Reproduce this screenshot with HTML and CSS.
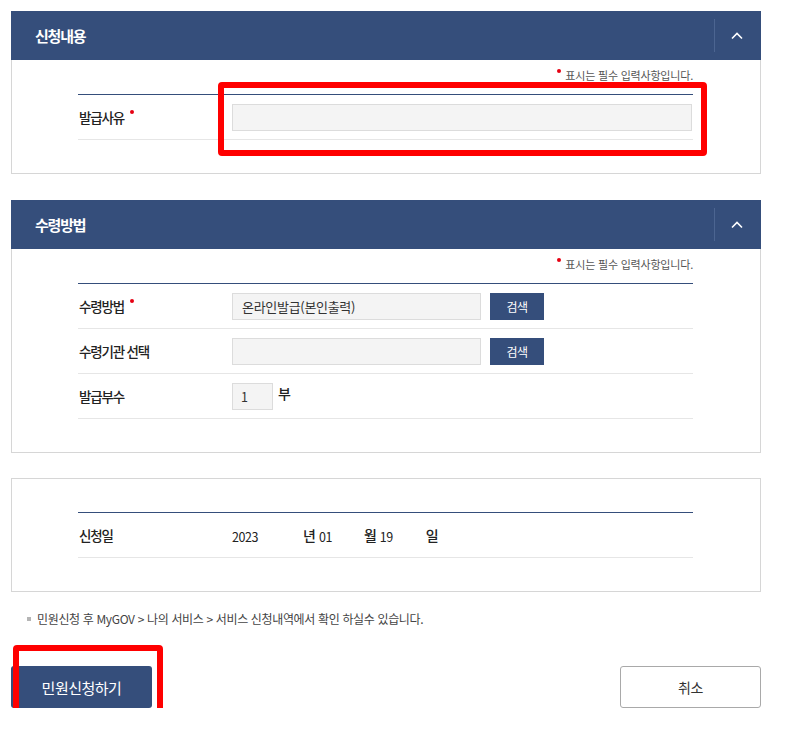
FILE: index.html
```html
<!DOCTYPE html>
<html lang="ko">
<head>
<meta charset="utf-8">
<title>민원신청</title>
<link rel="stylesheet" href="styles.css">
</head>
<body>
<div class="page">
  <section class="panel first">
    <div class="panel-head">
      <h2 class="panel-title">신청내용</h2>
      <button class="toggle" type="button" aria-label="접기">
        <svg width="12" height="8" viewBox="0 0 12 8"><polyline points="1,6.5 6,1.5 11,6.5" fill="none" stroke="#ffffff" stroke-width="1.6"/></svg>
      </button>
    </div>
    <div class="panel-body">
      <p class="req-note"><span class="req"></span>표시는 필수 입력사항입니다.</p>
      <div class="table">
        <div class="row">
          <div class="label">발급사유<span class="req"></span></div>
          <div class="field"><span class="input wide"></span></div>
        </div>
      </div>
    </div>
  </section>

  <section class="panel">
    <div class="panel-head">
      <h2 class="panel-title">수령방법</h2>
      <button class="toggle" type="button" aria-label="접기">
        <svg width="12" height="8" viewBox="0 0 12 8"><polyline points="1,6.5 6,1.5 11,6.5" fill="none" stroke="#ffffff" stroke-width="1.6"/></svg>
      </button>
    </div>
    <div class="panel-body">
      <p class="req-note"><span class="req"></span>표시는 필수 입력사항입니다.</p>
      <div class="table">
        <div class="row">
          <div class="label">수령방법<span class="req"></span></div>
          <div class="field"><span class="input mid">온라인발급(본인출력)</span><span class="btn-search">검색</span></div>
        </div>
        <div class="row">
          <div class="label">수령기관 선택</div>
          <div class="field"><span class="input mid"></span><span class="btn-search">검색</span></div>
        </div>
        <div class="row">
          <div class="label">발급부수</div>
          <div class="field"><span class="input small">1</span><span class="unit">부</span></div>
        </div>
      </div>
    </div>
  </section>

  <section class="panel boxed">
    <div class="panel-body">
      <div class="table">
        <div class="row">
          <div class="label">신청일</div>
          <div class="field date">
            <span class="num year">2023</span><span class="du">년</span><span class="num month">01</span><span class="du">월</span><span class="num day">19</span><span class="du">일</span>
          </div>
        </div>
      </div>
    </div>
  </section>

  <p class="info"><span class="bullet"></span>민원신청 후 MyGOV &gt; 나의 서비스 &gt; 서비스 신청내역에서 확인 하실수 있습니다.</p>

  <div class="actions">
    <button class="btn-primary" type="button">민원신청하기</button>
    <button class="btn-cancel" type="button">취소</button>
  </div>

  <div class="mark mark-input"></div>
  <div class="mark mark-submit"></div>
</div>
</body>
</html>
```

FILE: styles.css
```css
* { box-sizing: border-box; }
html, body { margin: 0; padding: 0; background: #ffffff; }
body {
  font-family: "Noto Sans CJK KR", "Noto Sans", sans-serif;
  color: #222222;
}
.page {
  position: relative;
  width: 794px;
  padding: 11px 0 0 11px;
}
.panel { width: 750px; margin-bottom: 25px; }
.panel.first { margin-bottom: 26px; }
.panel.boxed { margin-bottom: 0; }
.panel-head {
  height: 49px;
  background: #354e7b;
  display: flex;
  align-items: center;
  justify-content: space-between;
  padding-left: 24px;
}
.panel-title {
  margin: 0;
  color: #ffffff;
  font-size: 15px;
  font-weight: 700;
  letter-spacing: -1.2px;
  line-height: 20px;
}
.toggle {
  width: 47px;
  height: 33px;
  border: 0;
  border-left: 1px solid #4c6591;
  background: transparent;
  padding: 0 3px 0 0;
  display: flex;
  align-items: center;
  justify-content: center;
  cursor: pointer;
}
.toggle svg { display: block; }
.panel-body {
  border: 1px solid #d6d6d6;
  border-top: 0;
  padding: 0 67px 33px 66px;
}
.boxed .panel-body {
  border-top: 1px solid #d6d6d6;
  padding-top: 33px;
}
.req-note {
  margin: 0;
  padding: 5px 0 9px;
  line-height: 20px;
  text-align: right;
  font-size: 11px;
  letter-spacing: -0.2px;
  color: #555555;
}
.req {
  display: inline-block;
  width: 4px;
  height: 4px;
  border-radius: 50%;
  background: #e60012;
  position: relative;
}
.req-note .req { top: -7px; margin-right: 4px; }
.label .req { top: -9px; margin-left: 6px; }
.table { border-top: 1px solid #354e7b; }
.row {
  display: grid;
  grid-template-columns: 154px 1fr;
  align-items: center;
  height: 45px;
  border-bottom: 1px solid #e6e6e6;
}
.label {
  padding-left: 1px;
  font-size: 13.5px;
  font-weight: 500;
  letter-spacing: -1.2px;
  color: #222222;
  white-space: nowrap;
}
.field { display: flex; align-items: center; }
.input {
  display: flex;
  align-items: center;
  height: 27px;
  background: #f4f4f4;
  border: 1px solid #dcdcdc;
  padding-left: 9px;
  font-size: 13px;
  letter-spacing: -0.3px;
  color: #333333;
}
.input.wide { width: 460px; }
.input.mid { width: 249px; }
.input.small { width: 41px; padding-left: 8px; font-size: 12.5px; }
.btn-search {
  display: flex;
  align-items: center;
  justify-content: center;
  width: 54px;
  height: 27px;
  margin-left: 9px;
  background: #354e7b;
  color: #ffffff;
  font-size: 12px;
  letter-spacing: -0.5px;
}
.unit {
  margin-left: 5px;
  font-size: 14px;
  font-weight: 500;
  position: relative;
  top: -3px;
}
.date .num { font-size: 12.5px; letter-spacing: -0.4px; color: #222; padding-top: 2px; }
.date .du { font-size: 14px; font-weight: 500; margin-right: 3px; }
.date .year { width: 71px; }
.date .month { width: 45px; }
.date .day { width: 46px; }
.info {
  margin: 17px 0 0 0;
  padding-left: 16px;
  line-height: 20px;
  font-size: 12px;
  letter-spacing: -0.35px;
  color: #444444;
  display: flex;
  align-items: center;
}
.bullet {
  display: inline-block;
  width: 4px;
  height: 4px;
  background: #b5b5b5;
  margin-right: 6px;
}
.actions {
  width: 750px;
  margin-top: 37px;
  display: flex;
  justify-content: space-between;
}
.btn-primary, .btn-cancel {
  width: 141px;
  height: 42px;
  border-radius: 3px;
  font-family: inherit;
  font-size: 15px;
  letter-spacing: -0.5px;
  cursor: pointer;
}
.btn-primary {
  background: #354e7b;
  border: 0;
  color: #ffffff;
}
.btn-cancel {
  background: #ffffff;
  border: 1px solid #a9a9a9;
  color: #333333;
  font-size: 14px;
}
.mark {
  position: absolute;
  border: 6px solid #ff0000;
  border-radius: 4px;
  pointer-events: none;
}
.mark-input { left: 218px; top: 82px; width: 489px; height: 74px; }
.mark-submit { left: 13px; top: 645px; width: 150px; height: 75px; }
```
